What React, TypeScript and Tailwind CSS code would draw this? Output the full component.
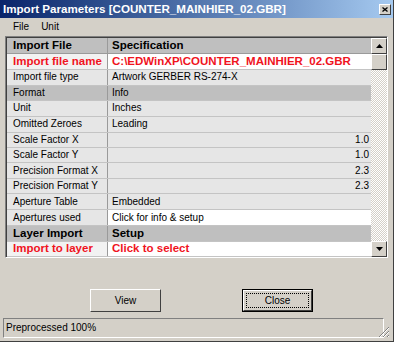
import React from "react";

type Row = {
  label: string;
  spec?: string;
  kind?: "red" | "section" | "bold" | "normal";
  align?: "right";
  white?: boolean;
  h: string;
};

const rows: Row[] = [
  { label: "Import file name", spec: "C:\\EDWinXP\\COUNTER_MAINHIER_02.GBR", kind: "red", white: true, h: "h-[16px]" },
  { label: "Import file type", spec: "Artwork GERBER RS-274-X", h: "h-[16px]" },
  { label: "Format", spec: "Info", kind: "section", h: "h-[15px]" },
  { label: "Unit", spec: "Inches", h: "h-[16px]" },
  { label: "Omitted Zeroes", spec: "Leading", h: "h-[16px]" },
  { label: "Scale Factor X", spec: "1.0", align: "right", h: "h-[16px]" },
  { label: "Scale Factor Y", spec: "1.0", align: "right", h: "h-[15px]" },
  { label: "Precision Format X", spec: "2.3", align: "right", h: "h-[16px]" },
  { label: "Precision Format Y", spec: "2.3", align: "right", h: "h-[15px]" },
  { label: "Aperture Table", spec: "Embedded", h: "h-[16px]" },
  { label: "Apertures used", spec: "Click for info & setup", white: true, h: "h-[16px]" },
  { label: "Layer Import", spec: "Setup", kind: "bold", h: "h-[16px]" },
  { label: "Import to layer", spec: "Click to select", kind: "red", white: true, h: "h-[15px]" },
];

function GridRow({ row }: { row: Row }) {
  const dark = row.kind === "section" || row.kind === "bold";
  const rowBg = dark ? "bg-[#bfbfbf]" : "bg-[#e6e6e6]";
  const text =
    row.kind === "red"
      ? "text-[#f0141e] font-bold text-[11.5px]"
      : row.kind === "bold"
      ? "text-black font-bold text-[11.5px]"
      : "text-black text-[10px]";
  return (
    <div className={`flex ${row.h} border-b border-[#c4c4c4] ${rowBg}`}>
      <div
        className={`w-[101px] shrink-0 pl-[6px] flex items-center border-r border-[#9a9a9a] whitespace-nowrap ${text} ${
          row.kind === "red" ? "bg-[#f2f2f2]" : ""
        }`}
      >
        {row.label}
      </div>
      <div
        className={`flex-1 flex items-center pl-[4px] pr-[2px] whitespace-nowrap ${text} ${
          row.white ? "bg-white" : ""
        } ${row.align === "right" ? "justify-end" : ""}`}
      >
        {row.spec}
      </div>
    </div>
  );
}

function ArrowBtn({ up }: { up?: boolean }) {
  return (
    <div className="h-[16px] w-[16px] bg-[#d4d0c8] border-t border-l border-t-white border-l-white border-r border-b border-r-[#404040] border-b-[#404040] flex items-center justify-center">
      <svg width="7" height="4" viewBox="0 0 7 4">
        {up ? (
          <polygon points="3.5,0 7,4 0,4" fill="#000" />
        ) : (
          <polygon points="0,0 7,0 3.5,4" fill="#000" />
        )}
      </svg>
    </div>
  );
}

function Button({ label, isDefault }: { label: string; isDefault?: boolean }) {
  if (isDefault) {
    return (
      <div className="w-[71px] h-[23px] border border-black">
        <div className="h-full w-full bg-[#d4d0c8] border-t border-l border-t-white border-l-white border-r border-b border-r-[#404040] border-b-[#404040] p-[2px]">
          <div className="h-full w-full border border-dotted border-black flex items-center justify-center text-black">
            {label}
          </div>
        </div>
      </div>
    );
  }
  return (
    <div className="w-[71px] h-[23px] bg-[#d4d0c8] border-t border-l border-t-white border-l-white border-r border-b border-r-[#404040] border-b-[#404040] flex items-center justify-center text-black">
      {label}
    </div>
  );
}

export default function App() {
  return (
    <div
      className="w-[397px] h-[346px] bg-white overflow-hidden text-[10px] leading-none"
      style={{ fontFamily: '"Liberation Sans", Arial, sans-serif' }}
    >
      <div className="w-[394px] h-[342px] bg-[#d4d0c8] border-r border-b border-r-[#404040] border-b-[#404040] flex flex-col">
        {/* Title bar */}
        <div className="h-[18px] flex items-center justify-between pl-[3px] pr-[2px] bg-gradient-to-r from-[#0a246a] to-[#a6caf0]">
          <span className="text-white font-bold text-[11.6px]">
            Import Parameters [COUNTER_MAINHIER_02.GBR]
          </span>
          <div className="w-[12px] h-[11px] bg-[#d4d0c8] border-t border-l border-t-white border-l-white border-r border-b border-r-[#404040] border-b-[#404040] flex items-center justify-center">
            <svg width="6" height="5" viewBox="0 0 6 5">
              <path d="M0.5 0.5 L5.5 4.5 M5.5 0.5 L0.5 4.5" stroke="#000" strokeWidth="1.3" />
            </svg>
          </div>
        </div>

        {/* Menu */}
        <div className="h-[18px] flex items-center gap-[12px] pl-[13px] text-black">
          <span>File</span>
          <span>Unit</span>
        </div>

        {/* Grid */}
        <div className="ml-[5px] mr-[5px] h-[222px] flex border-t border-l border-t-[#808080] border-l-[#808080] border-r border-b border-r-white border-b-white">
          <div className="flex-1 flex flex-col border-t border-l border-t-[#404040] border-l-[#404040] bg-[#e6e6e6]">
            <div className="flex h-[16px] border-b border-[#9a9a9a] bg-[#bfbfbf] font-bold text-[11.5px] text-black">
              <div className="w-[101px] shrink-0 pl-[6px] flex items-center border-r border-[#9a9a9a]">
                Import File
              </div>
              <div className="flex-1 flex items-center pl-[4px]">Specification</div>
            </div>
            {rows.map((r) => (
              <GridRow key={r.label} row={r} />
            ))}
          </div>
          <div className="w-[16px] flex flex-col border-t border-[#404040] bg-[repeating-conic-gradient(#ffffff_0_25%,#d4d0c8_0_50%)] bg-[length:2px_2px]">
            <ArrowBtn up />
            <div className="h-[16px] w-[16px] bg-[#d4d0c8] border-t border-l border-t-white border-l-white border-r border-b border-r-[#404040] border-b-[#404040]" />
            <div className="flex-1" />
            <ArrowBtn />
          </div>
        </div>

        {/* Buttons */}
        <div className="flex-1 flex items-end justify-start pb-[6px]">
          <div className="ml-[90px]">
            <Button label="View" />
          </div>
          <div className="ml-[81px]">
            <Button label="Close" isDefault />
          </div>
        </div>

        {/* Status bar */}
        <div className="flex items-end mb-[3px] mx-[3px]">
          <div className="flex-1 h-[20px] border-t border-l border-t-[#808080] border-l-[#808080] border-r border-b border-r-white border-b-white flex items-center pl-[2px] text-black">
            Preprocessed 100%
          </div>
          <div className="w-[6px] h-[12px] relative">
            <svg width="12" height="12" viewBox="0 0 12 12" className="absolute right-0 bottom-0">
              <path d="M11 1 L1 11 M11 5 L5 11 M11 9 L9 11" stroke="#808080" strokeWidth="1" />
              <path d="M11 2 L2 11 M11 6 L6 11 M11 10 L10 11" stroke="#ffffff" strokeWidth="1" />
            </svg>
          </div>
        </div>
      </div>
    </div>
  );
}
